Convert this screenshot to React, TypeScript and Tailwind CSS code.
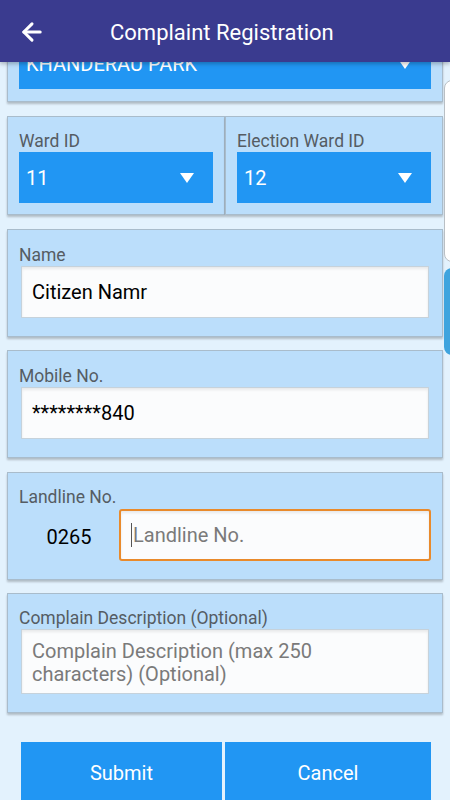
import { ArrowLeft } from 'lucide-react';
import { FC, ReactNode } from 'react';

const Card: FC<{ className?: string; children: ReactNode }> = ({ className = '', children }) => (
  <section
    className={`border border-[#a9bccb] bg-[#bbdefb] px-[11px] shadow-[0_2px_2px_rgba(0,0,0,0.22)] ${className}`}
  >
    {children}
  </section>
);

const Label: FC<{ children: ReactNode }> = ({ children }) => (
  <div className="flex h-[24px] items-center pt-[4px] text-[17.5px] leading-none text-[#555c63]">{children}</div>
);

const Caret = () => (
  <svg width="14" height="10" viewBox="0 0 14 10" className="shrink-0">
    <path d="M0 0 H14 L7 10 Z" fill="#ffffff" />
  </svg>
);

const Dropdown: FC<{ value: string }> = ({ value }) => (
  <div className="flex h-[51px] items-center justify-between bg-[#2196f3] pl-[7px] pr-[19px] text-[20px] text-white">
    <span>{value}</span>
    <Caret />
  </div>
);

const TextBox: FC<{ children: ReactNode; className?: string }> = ({ children, className = '' }) => (
  <div
    className={`mx-[2px] border border-[#c6d2db] bg-[#fbfcfd] px-[10px] text-[20px] shadow-[inset_0_2px_3px_rgba(0,0,0,0.08)] ${className}`}
  >
    {children}
  </div>
);

export default function App() {
  return (
    <div className="relative mx-auto flex h-[800px] w-[450px] flex-col overflow-hidden bg-[#e3f2fd] font-['Roboto','Noto_Sans',sans-serif]">
      <header className="relative z-10 flex h-[62px] shrink-0 items-center bg-[#3a3b8f] pt-[2px] shadow-[0_2px_4px_rgba(0,0,0,0.25)]">
        <ArrowLeft className="ml-[18px] text-white" size={28} strokeWidth={2.6} />
        <h1 className="ml-[64px] text-[22px] font-normal text-white">Complaint Registration</h1>
      </header>

      <main className="-mt-[59px] flex flex-col px-[7px]">
        <Card className="pb-[12px] pt-[34px]">
          <div className="flex h-[51px] items-center justify-between bg-[#2196f3] pl-[7px] pr-[19px] text-[20px] text-white">
            <span>KHANDERAU PARK</span>
            <Caret />
          </div>
        </Card>

        <div className="mt-[14px] flex">
          <Card className="w-[218px] pb-[11px] pt-[11px]">
            <Label>Ward ID</Label>
            <Dropdown value="11" />
          </Card>
          <Card className="w-[218px] pb-[11px] pt-[11px]">
            <Label>Election Ward ID</Label>
            <Dropdown value="12" />
          </Card>
        </div>

        <Card className="mt-[14px] pb-[18px] pt-[12px]">
          <Label>Name</Label>
          <TextBox className="flex h-[52px] items-center text-black">Citizen Namr</TextBox>
        </Card>

        <Card className="mt-[13px] pb-[18px] pt-[12px]">
          <Label>Mobile No.</Label>
          <TextBox className="flex h-[52px] items-center text-black">********840</TextBox>
        </Card>

        <Card className="mt-[14px] pb-[18px] pt-[11px]">
          <Label>Landline No.</Label>
          <div className="mt-[1px] flex items-center">
            <div className="w-[100px] pt-[4px] text-center text-[20px] text-black">0265</div>
            <div className="flex h-[52px] flex-1 items-center rounded-[3px] border-2 border-[#e98a2b] bg-[#fbfcfd] pl-[10px] text-[20px] text-[#7a7a7a] shadow-[inset_0_2px_3px_rgba(0,0,0,0.08)]">
              <span className="mr-px h-[24px] w-px bg-[#555]" />
              Landline No.
            </div>
          </div>
        </Card>

        <Card className="mt-[13px] pb-[18px] pt-[11px]">
          <Label>Complain Description (Optional)</Label>
          <TextBox className="h-[65px] pt-[10px] leading-[23px] text-[#7a7a7a]">
            Complain Description (max 250
            <br />
            characters) (Optional)
          </TextBox>
        </Card>

        <div className="ml-[14px] mr-[12px] mt-[29px] flex gap-[3px]">
          <button className="flex h-[62px] w-[201px] items-center justify-center bg-[#2196f3] text-[20px] text-white">
            Submit
          </button>
          <button className="flex h-[62px] flex-1 items-center justify-center bg-[#2196f3] text-[20px] text-white">
            Cancel
          </button>
        </div>
      </main>

      <div className="absolute left-[444px] top-[80px] h-[182px] w-[20px] rounded-l-[8px] border border-[#b9bfc4] bg-white" />
      <div className="absolute left-[444px] top-[268px] h-[87px] w-[20px] rounded-l-[8px] bg-[#3fa4de]" />
    </div>
  );
}
